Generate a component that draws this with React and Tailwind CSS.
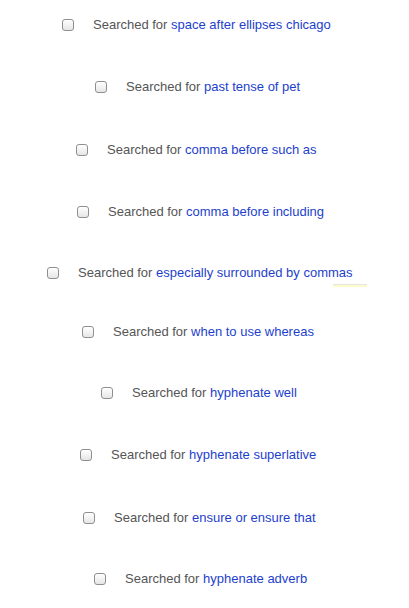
const rows = [
  { q: 'space after ellipses chicago', x: 62, y: 25 },
  { q: 'past tense of pet', x: 95, y: 87 },
  { q: 'comma before such as', x: 76, y: 150 },
  { q: 'comma before including', x: 77, y: 212 },
  { q: 'especially surrounded by commas', x: 47, y: 273, mark: true },
  { q: 'when to use whereas', x: 82, y: 332 },
  { q: 'hyphenate well', x: 101, y: 393 },
  { q: 'hyphenate superlative', x: 80, y: 455 },
  { q: 'ensure or ensure that', x: 83, y: 518 },
  { q: 'hyphenate adverb', x: 94, y: 579 },
];

function Checkbox() {
  return (
    <span className="block h-[12px] w-[12px] shrink-0 rounded-[3px] border border-[#8f8f8f] bg-gradient-to-b from-white to-[#e6e6e6] shadow-[inset_0_1px_0_#fff]" />
  );
}

export default function App() {
  let prev = 0;
  return (
    <div
      className="flex h-[608px] w-[409px] flex-col bg-white text-[13px] leading-[16px]"
      style={{ fontFamily: '"Liberation Sans", Arial, sans-serif' }}
    >
      {rows.map((r) => {
        const top = r.y - 8 - prev;
        prev = r.y + 8;
        return (
          <div
            key={r.q}
            className="relative flex h-[16px] items-center"
            style={{ marginTop: top, paddingLeft: r.x }}
          >
            <span className="-mt-[1px]">
              <Checkbox />
            </span>
            <span className="ml-[19px] whitespace-nowrap text-[#555555]">
              Searched for <span className="text-[#1d3fcc]">{r.q}</span>
            </span>
            {r.mark && (
              <span className="absolute left-[333px] top-[19px] h-[3px] w-[34px] border-t border-[#e4e4e4] bg-[#fdfbc8]" />
            )}
          </div>
        );
      })}
    </div>
  );
}
